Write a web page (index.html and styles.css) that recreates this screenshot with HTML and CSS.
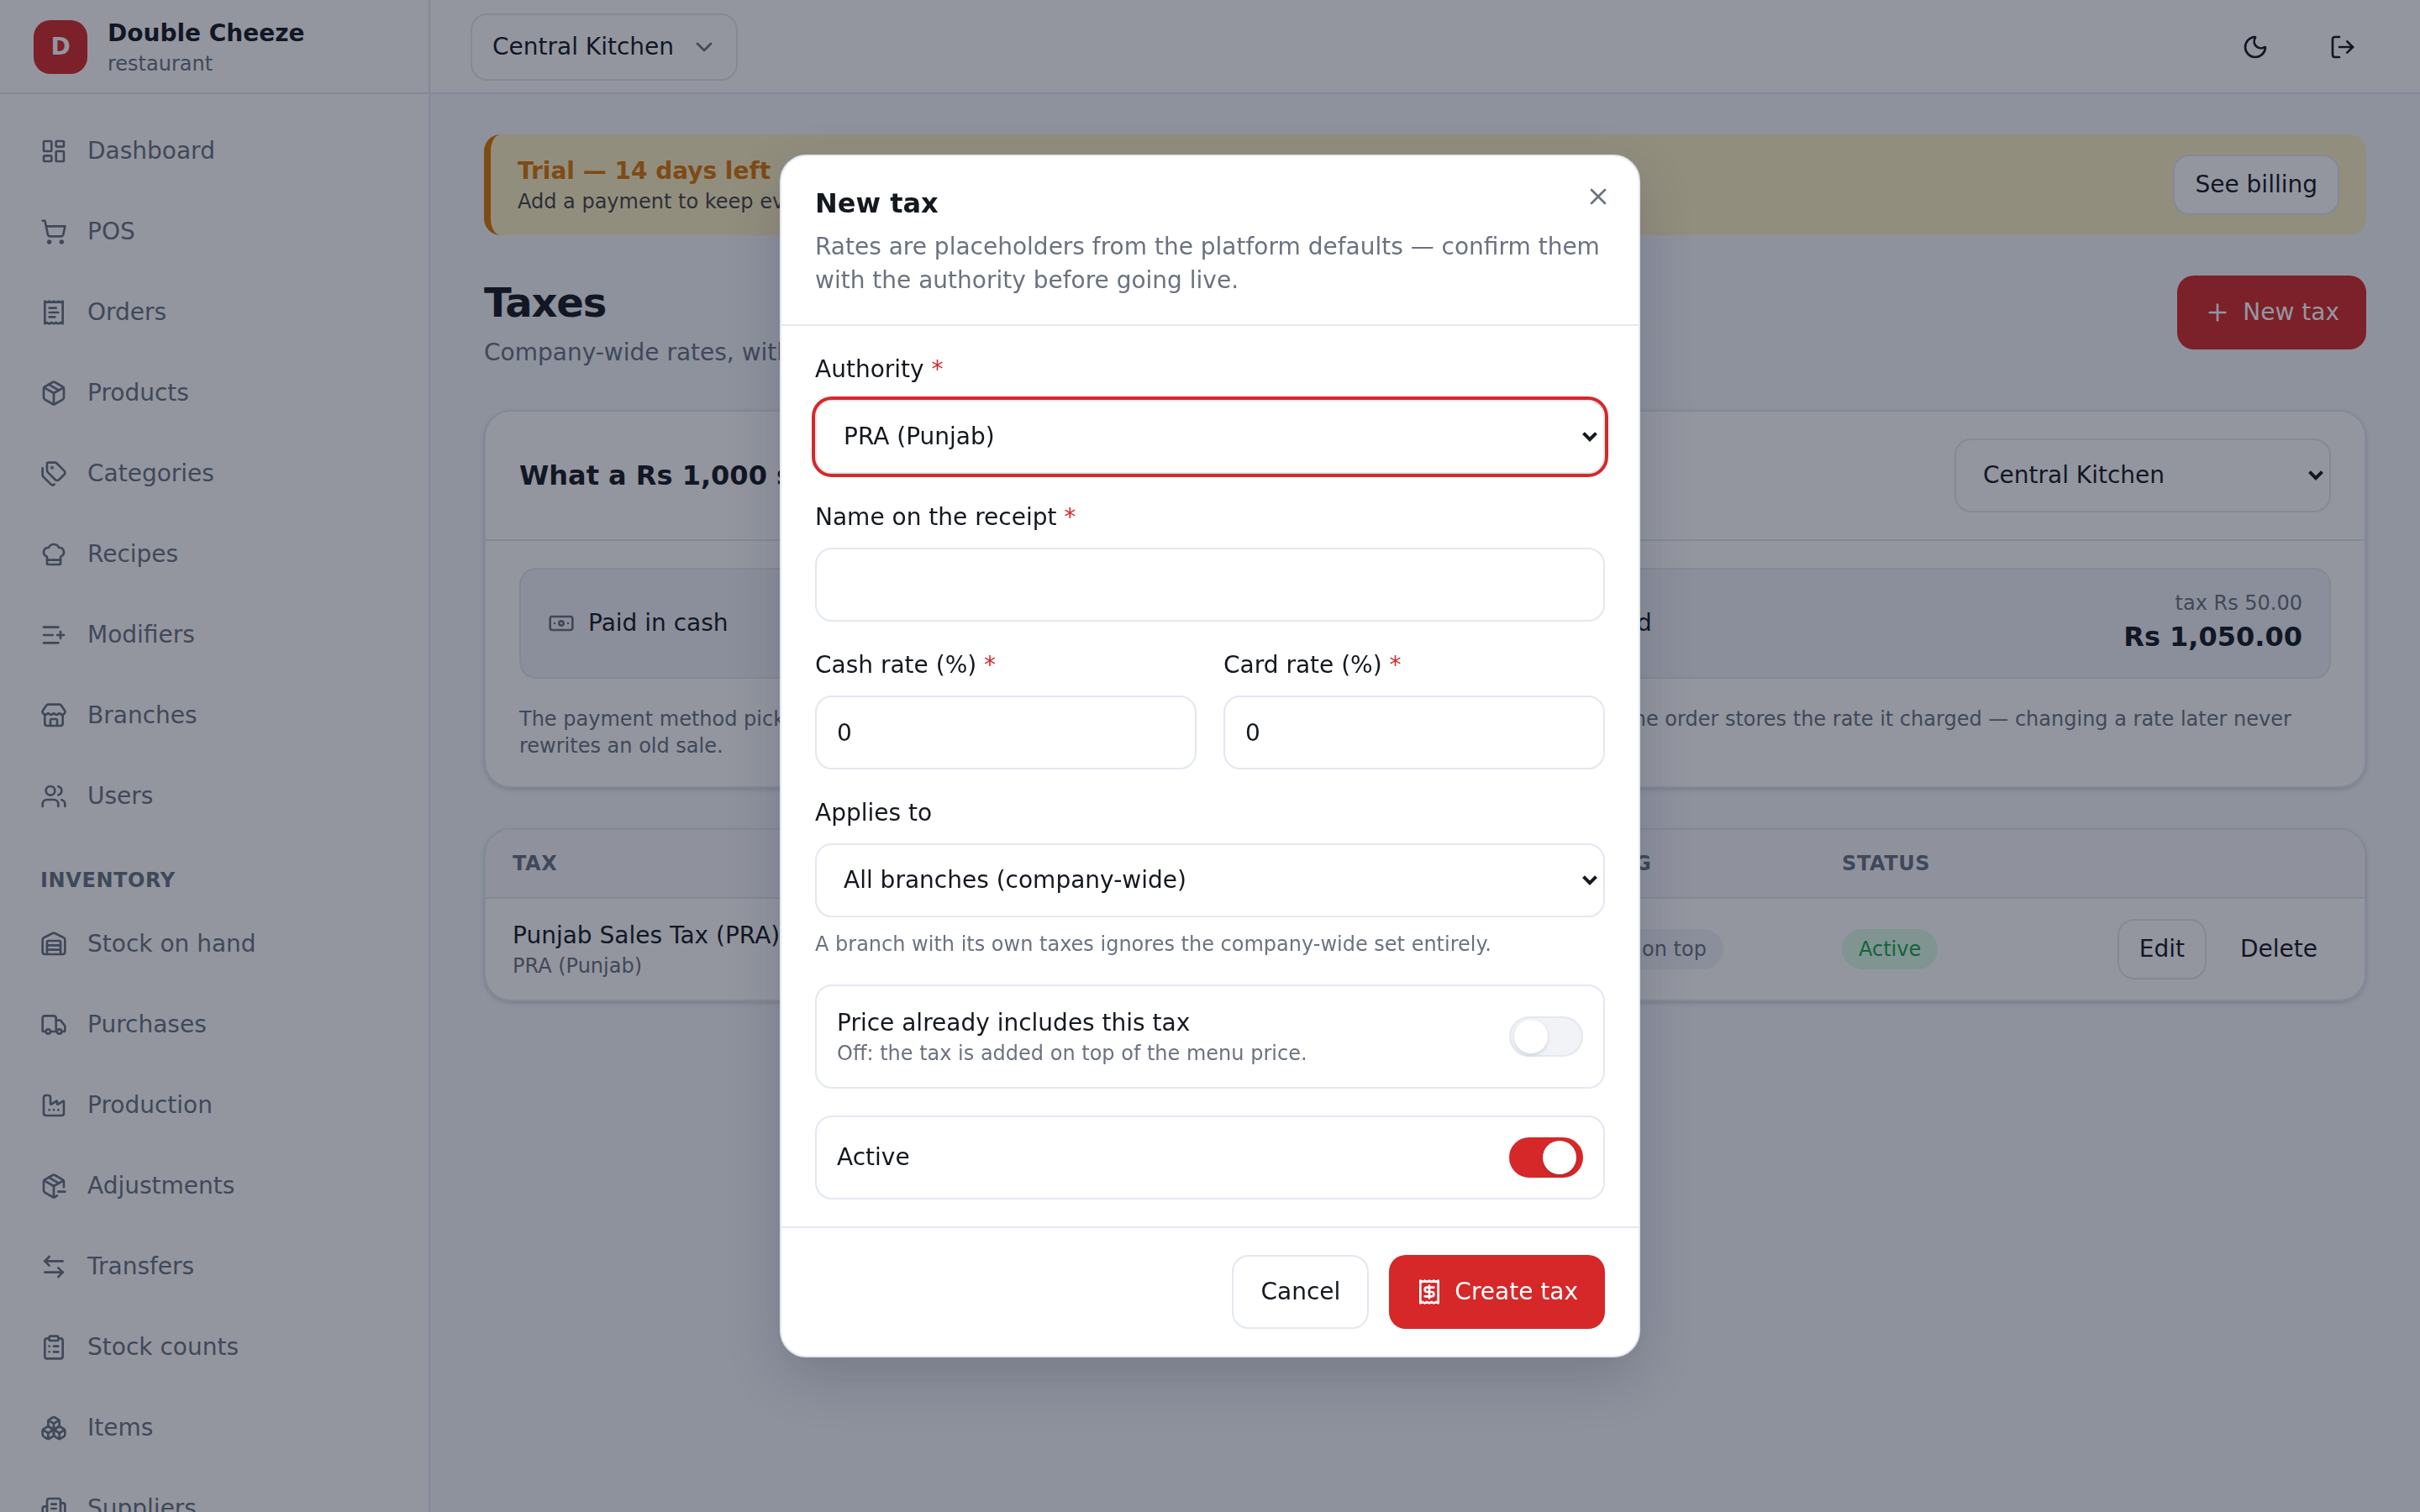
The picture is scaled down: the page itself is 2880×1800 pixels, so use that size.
FILE: index.html
```
<!DOCTYPE html>
<html lang="en">
<head>
  <meta charset="UTF-8">
  <title>Taxes - Double Cheeze</title>
  <meta name="viewport" content="width=device-width, initial-scale=1.0">
  <link rel="stylesheet" href="styles.css">
</head>
<body>
  <div class="app">
    <aside class="sidebar">
      <div class="brand">
        <div class="brand-logo">D</div>
        <div>
          <div class="brand-name">Double Cheeze</div>
          <div class="brand-type">restaurant</div>
        </div>
      </div>
      <nav class="nav">
        <a href="#"><svg class="icon" viewBox="0 0 24 24"><rect width="7" height="9" x="3" y="3" rx="1"/><rect width="7" height="5" x="14" y="3" rx="1"/><rect width="7" height="9" x="14" y="12" rx="1"/><rect width="7" height="5" x="3" y="16" rx="1"/></svg>Dashboard</a>
        <a href="#"><svg class="icon" viewBox="0 0 24 24"><circle cx="8" cy="21" r="1"/><circle cx="19" cy="21" r="1"/><path d="M2.05 2.05h2l2.66 12.42a2 2 0 0 0 2 1.58h9.78a2 2 0 0 0 1.95-1.57l1.65-7.43H5.12"/></svg>POS</a>
        <a href="#"><svg class="icon" viewBox="0 0 24 24"><path d="M4 2v20l2-1 2 1 2-1 2 1 2-1 2 1 2-1 2 1V2l-2 1-2-1-2 1-2-1-2 1-2-1-2 1Z"/><path d="M14 8H8"/><path d="M16 12H8"/><path d="M13 16H8"/></svg>Orders</a>
        <a href="#"><svg class="icon" viewBox="0 0 24 24"><path d="M11 21.73a2 2 0 0 0 2 0l7-4A2 2 0 0 0 21 16V8a2 2 0 0 0-1-1.73l-7-4a2 2 0 0 0-2 0l-7 4A2 2 0 0 0 3 8v8a2 2 0 0 0 1 1.73z"/><path d="M12 22V12"/><path d="M3.29 7 12 12l8.71-5"/><path d="m7.5 4.27 9 5.15"/></svg>Products</a>
        <a href="#"><svg class="icon" viewBox="0 0 24 24"><path d="M13.172 2a2 2 0 0 1 1.414.586l6.71 6.71a2.4 2.4 0 0 1 0 3.408l-4.592 4.592a2.4 2.4 0 0 1-3.408 0l-6.71-6.71A2 2 0 0 1 6 9.172V3a1 1 0 0 1 1-1z"/><path d="M2 7v6.172a2 2 0 0 0 .586 1.414l6.71 6.71a2.4 2.4 0 0 0 3.191.193"/><circle cx="10.5" cy="6.5" r=".5" fill="currentColor"/></svg>Categories</a>
        <a href="#"><svg class="icon" viewBox="0 0 24 24"><path d="M17 21a1 1 0 0 0 1-1v-5.35c0-.457.316-.844.727-1.041a4 4 0 0 0-2.134-7.589 5 5 0 0 0-9.186 0 4 4 0 0 0-2.134 7.588c.411.198.727.585.727 1.041V20a1 1 0 0 0 1 1Z"/><path d="M6 17h12"/></svg>Recipes</a>
        <a href="#"><svg class="icon" viewBox="0 0 24 24"><path d="M16 5H3"/><path d="M11 12H3"/><path d="M16 19H3"/><path d="M18 9v6"/><path d="M21 12h-6"/></svg>Modifiers</a>
        <a href="#"><svg class="icon" viewBox="0 0 24 24"><path d="M15 21v-5a1 1 0 0 0-1-1h-4a1 1 0 0 0-1 1v5"/><path d="M17.774 10.31a1.12 1.12 0 0 0-1.549 0 2.5 2.5 0 0 1-3.451 0 1.12 1.12 0 0 0-1.548 0 2.5 2.5 0 0 1-3.452 0 1.12 1.12 0 0 0-1.549 0 2.5 2.5 0 0 1-3.77-3.248l2.889-4.184A2 2 0 0 1 7 2h10a2 2 0 0 1 1.653.873l2.895 4.192a2.5 2.5 0 0 1-3.774 3.244"/><path d="M4 10.95V19a2 2 0 0 0 2 2h12a2 2 0 0 0 2-2v-8.05"/></svg>Branches</a>
        <a href="#"><svg class="icon" viewBox="0 0 24 24"><path d="M16 21v-2a4 4 0 0 0-4-4H6a4 4 0 0 0-4 4v2"/><path d="M16 3.128a4 4 0 0 1 0 7.744"/><path d="M22 21v-2a4 4 0 0 0-3-3.87"/><circle cx="9" cy="7" r="4"/></svg>Users</a>
        <h2 class="nav-title">Inventory</h2>
        <a href="#"><svg class="icon" viewBox="0 0 24 24"><path d="M18 21V10a1 1 0 0 0-1-1H7a1 1 0 0 0-1 1v11"/><path d="M22 19a2 2 0 0 1-2 2H4a2 2 0 0 1-2-2V8a2 2 0 0 1 1.132-1.803l7.95-3.974a2 2 0 0 1 1.837 0l7.948 3.974A2 2 0 0 1 22 8z"/><path d="M6 13h12"/><path d="M6 17h12"/></svg>Stock on hand</a>
        <a href="#"><svg class="icon" viewBox="0 0 24 24"><path d="M14 18V6a2 2 0 0 0-2-2H4a2 2 0 0 0-2 2v11a1 1 0 0 0 1 1h2"/><path d="M15 18H9"/><path d="M19 18h2a1 1 0 0 0 1-1v-3.65a1 1 0 0 0-.22-.624l-3.48-4.35A1 1 0 0 0 17.52 8H14"/><circle cx="17" cy="18" r="2"/><circle cx="7" cy="18" r="2"/></svg>Purchases</a>
        <a href="#"><svg class="icon" viewBox="0 0 24 24"><path d="M12 16h.01"/><path d="M16 16h.01"/><path d="M8 16h.01"/><path d="M3 19a2 2 0 0 0 2 2h14a2 2 0 0 0 2-2V8.5a.5.5 0 0 0-.769-.422l-4.462 2.844A.5.5 0 0 1 15 10.5v-2a.5.5 0 0 0-.769-.422L9.77 10.922A.5.5 0 0 1 9 10.5V5a2 2 0 0 0-2-2H5a2 2 0 0 0-2 2z"/></svg>Production</a>
        <a href="#"><svg class="icon" viewBox="0 0 24 24"><path d="M16 17h6"/><path d="M21 13V8a2 2 0 0 0-1-1.73l-7-4a2 2 0 0 0-2 0l-7 4A2 2 0 0 0 3 8v8a2 2 0 0 0 1 1.729l7 4a2 2 0 0 0 2 .001l2-1.143"/><path d="M3.29 7 12 12l8.71-5"/><path d="m7.5 4.27 9 5.15"/><path d="M12 22V12"/></svg>Adjustments</a>
        <a href="#"><svg class="icon" viewBox="0 0 24 24"><path d="m16 13 4 4-4 4"/><path d="M20 17H4"/><path d="m8 3-4 4 4 4"/><path d="M4 7h16"/></svg>Transfers</a>
        <a href="#"><svg class="icon" viewBox="0 0 24 24"><rect width="8" height="4" x="8" y="2" rx="1" ry="1"/><path d="M16 4h2a2 2 0 0 1 2 2v14a2 2 0 0 1-2 2H6a2 2 0 0 1-2-2V6a2 2 0 0 1 2-2h2"/><path d="M12 11h4"/><path d="M12 16h4"/><path d="M8 11h.01"/><path d="M8 16h.01"/></svg>Stock counts</a>
        <a href="#"><svg class="icon" viewBox="0 0 24 24"><path d="M2.97 12.92A2 2 0 0 0 2 14.63v3.24a2 2 0 0 0 .97 1.71l3 1.8a2 2 0 0 0 2.06 0L12 19v-5.5l-5-3-4.03 2.42Z"/><path d="m7 16.5-4.74-2.85"/><path d="m7 16.5 5-3"/><path d="M7 16.5v5.17"/><path d="M12 13.5V19l3.97 2.38a2 2 0 0 0 2.06 0l3-1.8a2 2 0 0 0 .97-1.71v-3.24a2 2 0 0 0-.97-1.71L17 10.5l-5 3Z"/><path d="m17 16.5-5-3"/><path d="m17 16.5 4.74-2.85"/><path d="M17 16.5v5.17"/><path d="M7.97 4.42A2 2 0 0 0 7 6.13v4.37l5 3 5-3V6.13a2 2 0 0 0-.97-1.71l-3-1.8a2 2 0 0 0-2.06 0l-3 1.8Z"/><path d="M12 8 7.26 5.15"/><path d="m12 8 4.74-2.85"/><path d="M12 13.5V8"/></svg>Items</a>
        <a href="#"><svg class="icon" viewBox="0 0 24 24"><path d="M10 12h4"/><path d="M10 8h4"/><path d="M14 21v-3a2 2 0 0 0-4 0v3"/><path d="M6 10H4a2 2 0 0 0-2 2v7a2 2 0 0 0 2 2h16a2 2 0 0 0 2-2V9a2 2 0 0 0-2-2h-2"/><path d="M6 21V5a2 2 0 0 1 2-2h8a2 2 0 0 1 2 2v16"/></svg>Suppliers</a>
      </nav>
    </aside>

    <div class="page">
      <header class="topbar">
        <button type="button" class="branch-btn">Central Kitchen
          <svg class="icon muted" viewBox="0 0 24 24"><path d="m6 9 6 6 6-6"/></svg>
        </button>
        <div class="topbar-actions">
          <button type="button" class="icon-btn" aria-label="Dark mode"><svg class="icon" viewBox="0 0 24 24"><path d="M20.985 12.486a9 9 0 1 1-9.473-9.472c.405-.022.617.46.402.803a6 6 0 0 0 8.268 8.268c.344-.215.825-.004.803.401"/></svg></button>
          <button type="button" class="icon-btn" aria-label="Log out"><svg class="icon" viewBox="0 0 24 24"><path d="m16 17 5-5-5-5"/><path d="M21 12H9"/><path d="M9 21H5a2 2 0 0 1-2-2V5a2 2 0 0 1 2-2h4"/></svg></button>
        </div>
      </header>

      <main class="content">
        <div class="banner">
          <div>
            <div class="banner-title">Trial — 14 days left</div>
            <div class="banner-text">Add a payment to keep everything running.</div>
          </div>
          <button type="button" class="btn btn-outline btn-sm">See billing</button>
        </div>

        <div class="page-head">
          <div>
            <h1>Taxes</h1>
            <p>Company-wide rates, with branch overrides.</p>
          </div>
          <button type="button" class="btn btn-primary"><svg class="icon" viewBox="0 0 24 24"><path d="M5 12h14"/><path d="M12 5v14"/></svg>New tax</button>
        </div>

        <section class="card">
          <div class="card-head">
            <h2>What a Rs 1,000 sale costs</h2>
            <div class="select-wrap branch-select">
              <select aria-label="Branch"><option>Central Kitchen</option></select>
              <svg class="arrow" viewBox="0 0 20 12"><path d="m2.5 1.6 7.5 7.5 7.5-7.5"/></svg>
            </div>
          </div>
          <div class="card-body">
            <div class="totals">
              <div class="total">
                <svg class="icon muted" viewBox="0 0 24 24"><rect width="20" height="12" x="2" y="6" rx="2"/><circle cx="12" cy="12" r="2"/><path d="M6 12h.01M18 12h.01"/></svg>
                <span>Paid in cash</span>
                <div class="total-sum"><small>tax Rs 160.00</small><strong>Rs 1,160.00</strong></div>
              </div>
              <div class="total">
                <svg class="icon muted" viewBox="0 0 24 24"><rect width="20" height="14" x="2" y="5" rx="2"/><path d="M2 10h20"/></svg>
                <span>Paid by card</span>
                <div class="total-sum"><small>tax Rs 50.00</small><strong>Rs 1,050.00</strong></div>
              </div>
            </div>
            <p class="note">The payment method picked at the till decides what rate is used for each sale. The rates come from here, so the order stores the rate it charged — changing a rate later never rewrites an old sale.</p>
          </div>
        </section>

        <section class="card">
          <table>
            <thead>
              <tr>
                <th>Tax</th>
                <th class="col-rate">Cash</th>
                <th class="col-rate">Card</th>
                <th class="col-wide">Pricing</th>
                <th class="col-wide">Status</th>
                <th class="col-actions"></th>
              </tr>
            </thead>
            <tbody>
              <tr>
                <td>
                  <div>Punjab Sales Tax (PRA)</div>
                  <div class="sub">PRA (Punjab)</div>
                </td>
                <td>16%</td>
                <td>5%</td>
                <td><span class="badge">Added on top</span></td>
                <td><span class="badge badge-green">Active</span></td>
                <td>
                  <div class="row-actions">
                    <button type="button" class="btn btn-outline btn-sm">Edit</button>
                    <button type="button" class="btn btn-ghost btn-sm">Delete</button>
                  </div>
                </td>
              </tr>
            </tbody>
          </table>
        </section>
      </main>
    </div>
  </div>

  <div class="overlay">
    <form class="modal" role="dialog" aria-labelledby="modal-title">
      <div class="modal-head">
        <h2 id="modal-title">New tax</h2>
        <p>Rates are placeholders from the platform defaults — confirm them with the authority before going live.</p>
        <button type="button" class="modal-close" aria-label="Close"><svg class="icon" viewBox="0 0 24 24"><path d="M18 6 6 18"/><path d="m6 6 12 12"/></svg></button>
      </div>

      <div class="modal-body">
        <div class="field">
          <label for="authority">Authority <span class="req">*</span></label>
          <div class="select-wrap">
            <select id="authority" class="focused"><option>PRA (Punjab)</option></select>
            <svg class="arrow" viewBox="0 0 20 12"><path d="m2.5 1.6 7.5 7.5 7.5-7.5"/></svg>
          </div>
        </div>

        <div class="field">
          <label for="name">Name on the receipt <span class="req">*</span></label>
          <input type="text" id="name">
        </div>

        <div class="field-row">
          <div class="field">
            <label for="cash">Cash rate (%) <span class="req">*</span></label>
            <input type="text" inputmode="decimal" id="cash" value="0">
          </div>
          <div class="field">
            <label for="card">Card rate (%) <span class="req">*</span></label>
            <input type="text" inputmode="decimal" id="card" value="0">
          </div>
        </div>

        <div class="field">
          <label for="applies">Applies to</label>
          <div class="select-wrap">
            <select id="applies"><option>All branches (company-wide)</option></select>
            <svg class="arrow" viewBox="0 0 20 12"><path d="m2.5 1.6 7.5 7.5 7.5-7.5"/></svg>
          </div>
          <p class="help">A branch with its own taxes ignores the company-wide set entirely.</p>
        </div>

        <div class="switch-row">
          <div>
            <label for="inclusive">Price already includes this tax</label>
            <p class="sub">Off: the tax is added on top of the menu price.</p>
          </div>
          <input type="checkbox" class="switch" id="inclusive">
        </div>

        <div class="switch-row">
          <label for="active">Active</label>
          <input type="checkbox" class="switch" id="active" checked>
        </div>
      </div>

      <div class="modal-foot">
        <button type="button" class="btn btn-outline">Cancel</button>
        <button type="submit" class="btn btn-primary"><svg class="icon" viewBox="0 0 24 24"><path d="M4 2v20l2-1 2 1 2-1 2 1 2-1 2 1 2-1 2 1V2l-2 1-2-1-2 1-2-1-2 1-2-1-2 1Z"/><path d="M16 8h-6a2 2 0 1 0 0 4h4a2 2 0 1 1 0 4H8"/><path d="M12 17.5v-11"/></svg>Create tax</button>
      </div>
    </form>
  </div>
</body>
</html>
```
FILE: styles.css
```
:root {
  --bg: #f5f7fb;
  --card: #ffffff;
  --muted-bg: #f1f3f7;
  --border: #e2e8f0;
  --text: #14181f;
  --muted: #6b7280;
  --primary: #d62828;
}

* {
  margin: 0;
  padding: 0;
  box-sizing: border-box;
}

body {
  font-family: "DejaVu Sans", sans-serif;
  font-size: 28px;
  line-height: 40px;
  color: var(--text);
  background: var(--bg);
  overflow: hidden;
}

button,
input,
select {
  font: inherit;
  color: inherit;
}

button {
  cursor: pointer;
}

.icon {
  width: 32px;
  height: 32px;
  flex-shrink: 0;
  fill: none;
  stroke: currentColor;
  stroke-width: 2;
  stroke-linecap: round;
  stroke-linejoin: round;
}

.muted {
  color: var(--muted);
}

.app {
  display: flex;
  height: 100vh;
  overflow: hidden;
}

/* sidebar */
.sidebar {
  width: 512px;
  flex-shrink: 0;
  background: var(--card);
  border-right: 2px solid var(--border);
}

.brand {
  display: flex;
  align-items: center;
  gap: 24px;
  height: 112px;
  padding: 0 40px;
  box-shadow: inset 0 -2px var(--border);
}

.brand-logo {
  display: flex;
  align-items: center;
  justify-content: center;
  width: 64px;
  height: 64px;
  border-radius: 20px;
  background: var(--primary);
  color: #fff;
  font-weight: bold;
}

.brand-name {
  font-weight: bold;
}

.brand-type {
  font-size: 24px;
  line-height: 32px;
  color: var(--muted);
}

.nav {
  display: flex;
  flex-direction: column;
  gap: 8px;
  padding: 24px;
}

.nav a {
  display: flex;
  align-items: center;
  gap: 24px;
  height: 88px;
  flex-shrink: 0;
  padding: 0 24px;
  border-radius: 20px;
  color: var(--muted);
  text-decoration: none;
}

.nav-title {
  padding: 32px 24px 8px;
  font-size: 24px;
  line-height: 32px;
  letter-spacing: 0.025em;
  text-transform: uppercase;
  color: var(--muted);
}

/* top bar */
.page {
  flex: 1;
  min-width: 0;
}

.topbar {
  display: flex;
  align-items: center;
  justify-content: space-between;
  height: 112px;
  padding: 0 48px;
  background: var(--card);
  box-shadow: inset 0 -2px var(--border);
}

.branch-btn {
  display: flex;
  align-items: center;
  gap: 20px;
  height: 80px;
  padding: 0 22px 0 24px;
  border: 2px solid var(--border);
  border-radius: 20px;
  background: var(--card);
}

.topbar-actions {
  display: flex;
  gap: 16px;
}

.icon-btn {
  display: flex;
  align-items: center;
  justify-content: center;
  width: 88px;
  height: 88px;
  border: none;
  background: none;
}

/* content */
.content {
  display: flex;
  flex-direction: column;
  gap: 48px;
  padding: 48px 64px;
}

.banner {
  display: flex;
  align-items: center;
  justify-content: space-between;
  padding: 24px 32px;
  border-left: 8px solid #d97706;
  border-radius: 20px;
  background: #fef0c3;
}

.banner-title {
  font-weight: bold;
  color: #d97706;
}

.banner-text {
  font-size: 24px;
  line-height: 32px;
  opacity: 0.8;
}

.btn {
  display: inline-flex;
  align-items: center;
  justify-content: center;
  gap: 14px;
  height: 88px;
  padding: 0 32px;
  border: none;
  border-radius: 20px;
  white-space: nowrap;
}

.btn-sm {
  height: 72px;
  padding: 0 24px;
}

.btn-primary {
  background: var(--primary);
  color: #fff;
}

.btn-outline {
  border: 2px solid var(--border);
  background: var(--card);
}

.btn-ghost {
  background: none;
}

.page-head {
  display: flex;
  align-items: flex-start;
  justify-content: space-between;
}

.page-head h1 {
  font-size: 48px;
  line-height: 64px;
  letter-spacing: -0.025em;
}

.page-head p {
  margin-top: 8px;
  color: var(--muted);
}

.card {
  border: 2px solid var(--border);
  border-radius: 32px;
  background: var(--card);
  box-shadow: 0 2px 6px rgba(15, 23, 42, 0.1), 0 2px 4px rgba(15, 23, 42, 0.06);
  overflow: hidden;
}

.card-head {
  display: flex;
  align-items: center;
  justify-content: space-between;
  padding: 32px 40px;
  border-bottom: 2px solid var(--border);
}

.card-head h2 {
  font-size: 32px;
}

.branch-select {
  width: 448px;
}

.card-body {
  padding: 32px 40px;
}

.totals {
  display: grid;
  grid-template-columns: 1fr 1fr;
  gap: 32px;
}

.total {
  display: flex;
  align-items: center;
  gap: 16px;
  padding: 24px 32px;
  border: 2px solid var(--border);
  border-radius: 20px;
  background: var(--muted-bg);
}

.total-sum {
  margin-left: auto;
  text-align: right;
}

.total-sum small {
  display: block;
  font-size: 24px;
  line-height: 32px;
  color: var(--muted);
}

.total-sum strong {
  display: block;
  font-size: 32px;
  line-height: 48px;
}

.note {
  margin-top: 32px;
  font-size: 24px;
  line-height: 32px;
  color: var(--muted);
}

table {
  width: 100%;
  table-layout: fixed;
  border-collapse: collapse;
}

th {
  padding: 24px 32px;
  border-bottom: 2px solid var(--border);
  background: #f8f8fb;
  font-size: 24px;
  line-height: 32px;
  letter-spacing: 0.025em;
  text-align: left;
  text-transform: uppercase;
  color: var(--muted);
}

td {
  padding: 24px 32px;
}

.col-rate {
  width: 290px;
}

.col-wide {
  width: 342px;
}

.col-actions {
  width: 312px;
}

.sub {
  font-size: 24px;
  line-height: 32px;
  color: var(--muted);
}

.badge {
  display: inline-block;
  padding: 8px 20px;
  border-radius: 24px;
  background: var(--muted-bg);
  font-size: 24px;
  line-height: 32px;
  color: var(--muted);
}

.badge-green {
  background: #dcfce7;
  color: #16a34a;
}

.row-actions {
  display: flex;
  justify-content: flex-end;
  gap: 16px;
}

/* form controls */
input[type="text"],
select {
  width: 100%;
  height: 88px;
  padding: 0 24px;
  border: 2px solid var(--border);
  border-radius: 20px;
  background: var(--card);
  outline: none;
}

select {
  appearance: none;
  padding: 0 48px 0 32px;
}

select.focused {
  box-shadow: 0 0 0 4px var(--primary);
}

.select-wrap {
  position: relative;
}

.arrow {
  position: absolute;
  top: 38px;
  right: 8px;
  width: 20px;
  height: 12px;
  fill: none;
  stroke: currentColor;
  stroke-width: 4;
  pointer-events: none;
}

/* modal */
.overlay {
  position: fixed;
  inset: 0;
  display: flex;
  align-items: center;
  justify-content: center;
  background: rgba(15, 23, 42, 0.45);
}

.modal {
  position: relative;
  width: 1024px;
  border: 2px solid var(--border);
  border-radius: 32px;
  background: var(--card);
  box-shadow: 0 24px 64px rgba(15, 23, 42, 0.18);
}

.modal-head {
  padding: 32px 40px;
  border-bottom: 2px solid var(--border);
}

.modal-head h2 {
  font-size: 32px;
  line-height: 48px;
}

.modal-head p {
  margin-top: 8px;
  color: var(--muted);
}

.modal-close {
  position: absolute;
  top: 32px;
  right: 32px;
  display: flex;
  border: none;
  background: none;
  color: var(--muted);
}

.modal-body {
  display: flex;
  flex-direction: column;
  gap: 32px;
  padding: 32px 40px;
}

.field {
  display: flex;
  flex-direction: column;
  gap: 16px;
}

.field-row {
  display: grid;
  grid-template-columns: 1fr 1fr;
  gap: 32px;
}

.req {
  color: var(--primary);
}

.help {
  font-size: 24px;
  line-height: 32px;
  color: var(--muted);
}

.switch-row {
  display: flex;
  align-items: center;
  justify-content: space-between;
  padding: 24px;
  border: 2px solid var(--border);
  border-radius: 20px;
}

.switch-row label {
  display: block;
}

.switch {
  appearance: none;
  display: flex;
  align-items: center;
  width: 88px;
  height: 48px;
  padding: 0 6px 0 4px;
  border: 2px solid var(--border);
  border-radius: 24px;
  background: var(--muted-bg);
}

.switch::before {
  content: "";
  width: 40px;
  height: 40px;
  border-radius: 50%;
  background: #fff;
  box-shadow: 0 2px 4px rgba(15, 23, 42, 0.15);
}

.switch:checked {
  justify-content: flex-end;
  border-color: var(--primary);
  background: var(--primary);
}

.modal-foot {
  display: flex;
  justify-content: flex-end;
  gap: 24px;
  padding: 32px 40px;
  border-top: 2px solid var(--border);
}
```
